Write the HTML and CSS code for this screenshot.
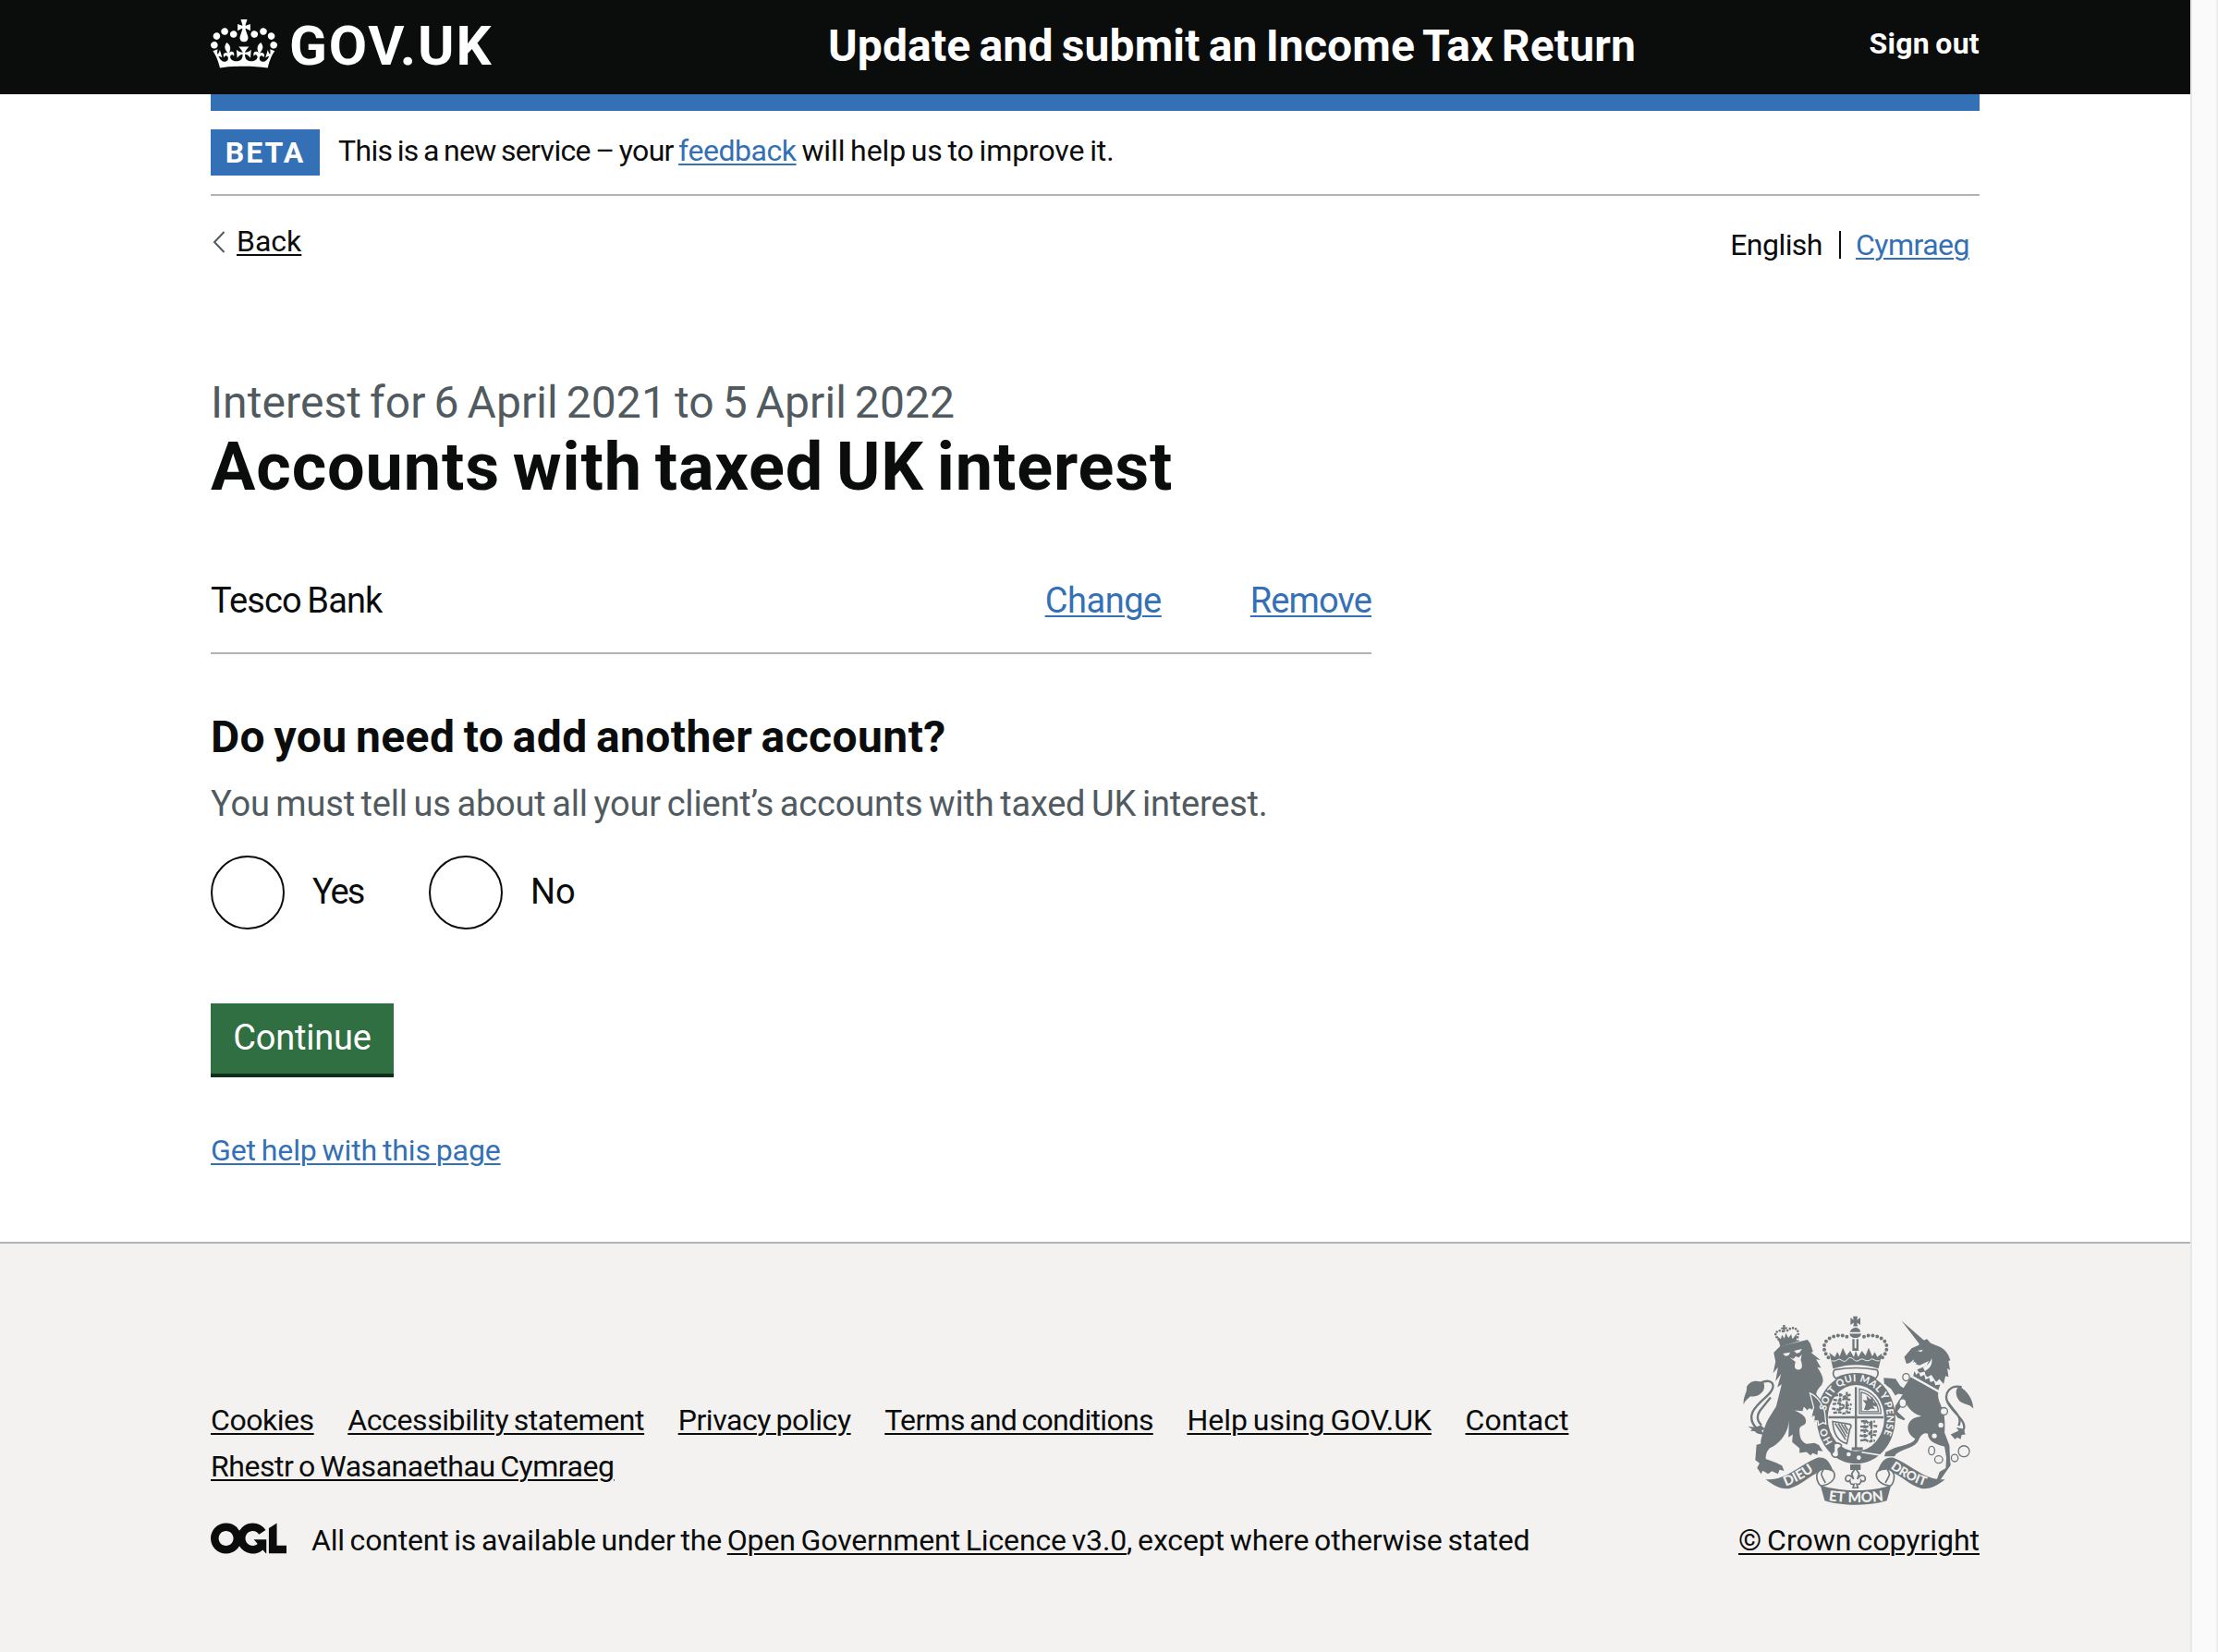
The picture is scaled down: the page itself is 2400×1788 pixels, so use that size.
FILE: index.html
```
<!DOCTYPE html>
<html lang="en">
<head>
<meta charset="utf-8">
<title>Accounts with taxed UK interest</title>
<link rel="stylesheet" href="styles.css">
</head>
<body>
<div class="page">
  <header class="header">
    <div class="container header-row">
      <a class="logo" href="#">
        <svg class="crown" viewBox="0 0 132 97" aria-hidden="true"><path fill="currentColor" fill-rule="evenodd" d="M25 30.2c3.5 1.5 7.7-.2 9.1-3.7 1.5-3.6-.2-7.8-3.9-9.2-3.6-1.4-7.6.3-9.1 3.9-1.4 3.5.3 7.5 3.9 9zM9 39.5c3.6 1.5 7.8-.2 9.2-3.7 1.5-3.6-.2-7.8-3.9-9.1-3.6-1.5-7.6.2-9.1 3.8-1.4 3.5.3 7.5 3.8 9zM4.4 57.2c3.5 1.5 7.7-.2 9.1-3.8 1.5-3.6-.2-7.7-3.9-9.1-3.5-1.5-7.6.3-9.1 3.8-1.4 3.5.3 7.6 3.9 9.1zm38.3-21.4c3.5 1.5 7.7-.2 9.1-3.8 1.5-3.6-.2-7.7-3.9-9.1-3.6-1.5-7.6.3-9.1 3.8-1.3 3.6.4 7.7 3.9 9.1zm64.4-5.6c-3.6 1.5-7.8-.2-9.1-3.7-1.5-3.6.2-7.8 3.8-9.2 3.6-1.4 7.7.3 9.2 3.9 1.3 3.5-.4 7.5-3.9 9zm15.9 9.3c-3.6 1.5-7.7-.2-9.1-3.7-1.5-3.6.2-7.8 3.7-9.1 3.6-1.5 7.7.2 9.2 3.8 1.5 3.5-.3 7.5-3.8 9zm4.7 17.7c-3.6 1.5-7.8-.2-9.2-3.8-1.5-3.6.2-7.7 3.9-9.1 3.6-1.5 7.7.3 9.2 3.8 1.3 3.5-.4 7.6-3.9 9.1zM89.3 35.8c-3.6 1.5-7.8-.2-9.2-3.8-1.4-3.6.2-7.7 3.9-9.1 3.6-1.5 7.7.3 9.2 3.8 1.4 3.6-.3 7.7-3.9 9.1zM69.7 17.7l8.9 4.7V9.3l-8.9 2.8c-.2-.3-.5-.6-.9-.9L72.4 0H59.6l3.5 11.2c-.3.3-.6.5-.9.9l-8.8-2.8v13.1l8.8-4.7c.3.3.6.7.9.9l-5 15.4v.1c-.2.8-.4 1.6-.4 2.4 0 4.1 3.1 7.5 7 8.1h.2c.3 0 .7.1 1 .1.4 0 .7 0 1-.1h.2c4-.6 7.1-4.1 7.1-8.1 0-.8-.1-1.7-.4-2.4V34l-5.1-15.4c.4-.2.7-.6 1-.9zM66 92.8c16.9 0 32.8 1.1 47.1 3.2 4-16.9 8.9-26.7 14-33.5l-9.6-3.4c1 4.9 1.1 7.2 0 10.2-1.5-1.4-3-4.3-4.2-8.7L108.6 76c2.8-2 5-3.2 7.5-3.3-4.4 9.4-10 11.9-13.6 11.2-4.3-.8-6.3-4.6-5.6-7.9 1-4.7 5.7-5.9 8-.5 4.3-8.7-3-11.4-7.6-8.8 7.1-7.2 7.9-13.5 2.1-21.1-8 6.1-8.1 12.3-4.5 20.8-4.7-5.4-12.1-2.5-9.5 6.2 3.4-5.2 7.9-2 7.2 3.1-.6 4.3-6.4 7.8-13.5 7.2-10.3-.9-10.9-8-11.2-13.8 2.5-.5 7.1 1.8 11 7.3L80.2 60c-4.1 4.4-8 5.3-12.3 5.4 1.4-4.4 8-11.6 8-11.6H55.5s6.4 7.2 7.9 11.6c-4.2-.1-8-1-12.3-5.4l1.4 16.4c3.9-5.5 8.5-7.7 10.9-7.3-.3 5.8-.9 12.8-11.1 13.8-7.2.6-12.9-2.9-13.5-7.2-.7-5 3.8-8.3 7.1-3.1 2.7-8.7-4.6-11.6-9.4-6.2 3.7-8.5 3.6-14.7-4.6-20.8-5.8 7.6-5 13.9 2.2 21.1-4.7-2.6-11.9.1-7.7 8.8 2.3-5.5 7.1-4.2 8.1.5.7 3.3-1.3 7.1-5.7 7.9-3.5.7-9-1.8-13.5-11.2 2.5.1 4.7 1.3 7.5 3.3l-4.7-15.4c-1.2 4.4-2.7 7.2-4.3 8.7-1.1-3-.9-5.3 0-10.2l-9.5 3.4c5 6.9 9.9 16.7 14 33.5 14.8-2.1 30.8-3.2 47.7-3.2z"/></svg>
        <span class="logo-text">GOV.UK</span>
      </a>
      <a class="service-name" href="#">Update and submit an Income Tax Return</a>
      <a class="sign-out" href="#">Sign out</a>
    </div>
  </header>

  <div class="container top">
    <div class="bar"></div>
    <div class="phase">
      <strong class="tag">BETA</strong>
      <p class="phase-text"><span class="phase-a">This is a new service – your </span><a class="link phase-b" href="#">feedback</a><span class="phase-c"> will help us to improve it.</span></p>
    </div>
    <div class="nav-row">
      <div class="back">
        <svg class="chevron" viewBox="0 0 14 24" aria-hidden="true"><path d="M12.5 1 2 12l10.500 11" fill="none" stroke="#505a5f" stroke-width="2"/></svg>
        <a class="link dark" href="#">Back</a>
      </div>
      <div class="languages">
        <span class="lang-en">English</span>
        <span class="divider"></span>
        <a class="link lang-cy" href="#">Cymraeg</a>
      </div>
    </div>
  </div>

  <main class="container main">
    <span class="caption">Interest for 6 April 2021 to 5 April 2022</span>
    <h1 class="heading">Accounts with taxed UK interest</h1>
    <div class="account">
      <span class="account-name">Tesco Bank</span>
      <a class="link change" href="#">Change</a>
      <a class="link remove" href="#">Remove</a>
    </div>
    <h2 class="question">Do you need to add another account?</h2>
    <p class="hint">You must tell us about all your client’s accounts with taxed UK interest.</p>
    <div class="radios">
      <label class="radio"><span class="circle"></span><span class="yes">Yes</span></label>
      <label class="radio"><span class="circle"></span><span>No</span></label>
    </div>
    <button class="button" type="button">Continue</button>
    <p class="help"><a class="link" href="#">Get help with this page</a></p>
  </main>

  <footer class="footer">
    <div class="container footer-row">
      <div class="meta">
        <ul class="footer-links">
          <li><a class="link dark cookies" href="#">Cookies</a></li>
          <li><a class="link dark access" href="#">Accessibility statement</a></li>
          <li><a class="link dark privacy" href="#">Privacy policy</a></li>
          <li><a class="link dark terms" href="#">Terms and conditions</a></li>
          <li><a class="link dark using" href="#">Help using GOV.UK</a></li>
          <li><a class="link dark contact" href="#">Contact</a></li>
          <li><a class="link dark rhestr" href="#">Rhestr o Wasanaethau Cymraeg</a></li>
        </ul>
        <div class="licence">
          <svg class="ogl" viewBox="0 0 483.2 195.7" aria-hidden="true"><path fill="currentColor" d="M421.5 142.8V.1l-50.7 32.3v161.1h112.4v-50.7zm-122.3-9.6A47.12 47.12 0 0 1 221 97.8c0-26 21.1-47.1 47.1-47.1 16.7 0 31.4 8.7 39.7 21.8l42.7-27.2A97.63 97.63 0 0 0 268.1 0c-36.5 0-68.3 20.1-85.1 49.7A98 98 0 0 0 97.8 0C43.9 0 0 43.9 0 97.8s43.9 97.8 97.8 97.8c36.5 0 68.3-20.1 85.1-49.7a97.76 97.76 0 0 0 149.6 25.4l19.4 22.2h3v-87.8h-80l24.3 27.5zM97.8 145c-26 0-47.1-21.1-47.1-47.1s21.1-47.1 47.1-47.1 47.1 21.1 47.1 47.1S123.8 145 97.8 145"/></svg>
          <p class="licence-text">All content is available under the <a class="link dark licence-link" href="#">Open Government Licence v3.0</a><span class="licence-tail">, except where otherwise stated</span></p>
        </div>
      </div>
      <div class="copyright">
        <svg class="arms" viewBox="78 70 752 616" aria-hidden="true">
          <defs>
            <path id="garter" d="M370 482A100 120 0 1 1 505 501"/>
            <path id="scroll-left" d="M217 625Q274 604 324 564"/>
            <path id="scroll-right" d="M557 566Q610 606 680 627"/>
            <path id="scroll-mid" d="M356 671Q444 684 540 671"/>
          </defs>
          <g class="ink">
            <!-- lion -->
            <path d="M178 190l20-20 90-22 9 12 9 26-6 4 30 24-14-2 16 28-12-3c16 24 24 42 14 58-10 10-16 18-18 30l29 35 7 50-7 18-10-8-10 5-3-13-14 3 2-15-12 0 10-20c-8-8-16-12-20-2l-12-12-4 14-26-2c16 8 38 17 37 36-1 16-21 11-21 26 0 25 4 40 23 47l26-3 14 7 13 20-16-2-2 14-15-6-7 8-13-12-23 3v-15l-24-20 2-25-14 10 2-55c-3 40-28 70-53 85-15 5-23 20-23 40l33 12 20 10 7 17-15-4-5 14-20-9-12 9-18-11-5 11-13-20 8-15-14-10 4-50 14-4c-3-10 15-66 25-81l25-40 18-72-14 10 12-44-18 24 8-46-16 20 8-38z"/>
            <path d="M80 360c-2-30 12-38 10-58 12-22 34-24 56-12 8 26-18 46-44 42-10 10-18 14-22 28zM94 430c16 4 30 2 42-4l14 12-12 6 10 12c-16 2-26-2-32-10l-14-1 6-5z"/>
            <path class="line" stroke-width="7" d="M124 438c-26-26-22-48-6-68 22-30 56-46 58-70 0-18-18-22-40-12M138 426c-16-16-14-34-4-48l34-42"/>
            <!-- lion's crown -->
            <path d="M197 160l-10-26 14 12 4-14 8 12 4-18 9 16 9-12 4 16 14-18-1 24-53 18z"/>
            <path class="line beads" stroke-width="8" d="M194 148c-16-18-12-26 6-30l12 4M256 140c6-18-2-32-22-30l-14 10"/>
            <path d="M208 100h7v7h7v6h-7v10h-6v-9h-7v-6h6z"/>
            <path class="line" stroke-width="5" d="M200 168l60-18"/>
            <!-- unicorn -->
            <path d="M594 86l82 72-18 12z"/>
            <path d="M677 146l12 13 24 10c22 8 34 24 40 46l-6 2 5 30-9-6 4 28-10-3-6 26-14-16-10 10-16-24-16 10-6-20-18 4-6-11 30-12 8-16-30 14-22-6 4-13-15 12-10 2-7-22 24-28 22-10 14-14 8-4z"/>
            <path d="M624 270l90 48c-4 20 4 32 10 48 12 24 12 60 10 84l16 42 2 50 2 14-32 46-14 4 10-28 20-12 2-34-6-36c-20-6-54-14-54-42-12-6-24 4-30 20-12 28-46 24-74 46l-4 8-34 0 4-14 30-14 36-10c20-6 30-14 30-20-32-18-30-56 0-68 10-4 14-2 20-6-24-6-42-22-50-44l-16 14-12 16 26 24-4 4-20-8-12-16 4-22 24-38-28-4-10-24-22-6-2-20 30 2 16 22 18 10z"/>
            <path d="M828 372c-2-30-20-60-48-72-10 10-12 26 0 44 12 16 34 10 48 28zM754 456l26-12-8-10 24 4 6 18-12 2-4 14-10-6-8 6z"/>
            <path class="line" stroke-width="7" d="M790 302c-36-8-60 18-46 50 14 30 56 54 54 82-2 14-14 20-28 20M744 350l18 24c20 22 26 34 18 54"/>
            <!-- garter -->
            <ellipse cx="446" cy="404" rx="128" ry="148"/>
          </g>
          <g class="paper">
            <ellipse cx="446" cy="403" rx="92" ry="108"/>
            <circle cx="422" cy="521" r="7"/><circle cx="455" cy="532" r="7"/>
            <path d="M208 193l24-4-6 10-10 2zM244 184l26-6-8 12-10 2zM230 206l12 4 8-8 10 4 9-10-3 18c8 22 4 30-8 32-12-2-14-10-9-26z"/>
            <path d="M646 184l18-4-6 8zM614 228l22-8 8 6-22 8zM664 238c14-6 24-16 28-30 4 20-6 34-22 42z"/>
            <path d="M634 244l98 54-14 24-92-52z"/>
            <circle cx="722" cy="426" r="8"/><circle cx="701" cy="461" r="8"/>
            <ellipse cx="589" cy="296" rx="6" ry="9"/>
          </g>
          <!-- chain -->
          <g class="cap chain"><ellipse cx="609" cy="270" rx="11" ry="12"/><ellipse cx="598" cy="354" rx="12" ry="14"/><circle cx="732" cy="381" r="12"/><ellipse cx="692" cy="509" rx="10" ry="14"/><ellipse cx="715" cy="538" rx="13" ry="12"/><ellipse cx="767" cy="533" rx="11" ry="12"/><circle cx="797" cy="511" r="18"/></g>
          <g class="ink">
            <path d="M636 250l6 12 8-8 6 14 12-6 4 16 12-6 4 14 12-4 4 14 16-2-6 18-82-46z"/>
            <!-- shield -->
            <path d="M442 302h7v202h-7zM356 397h180v7H356z"/>
            <g class="line" stroke-width="7">
              <path d="M376 330l20-4 10 8 24-8M372 344l24 2 12-6 22 4M370 358l22-4 16 10 24-6M368 372l24 4 14-8 24 6M372 386l20-2 12 4 26-4M394 322v64M416 318v66" stroke-dasharray="12 3"/>
              <path d="M462 414l16-2 8 8 22-6M460 430l20 2 10-6 26 4M460 444l18-2 12 8 24-4M458 460l20 2 12-8 24 6M460 476l18-2 10 6 20-4M474 410v68M496 412v70" stroke-dasharray="12 3"/>
            </g>
            <path class="line" stroke-width="4" d="M457 308v80h70c0-38-28-74-70-80zM463 318v64h56c-4-32-26-56-56-64"/>
            <path d="M472 376l6-18-10-14 14 2-2-16 12 12 8-8 2 18 14 4-4 10-12-4 8 12-12-2-12 6z"/>
            <path class="line" stroke-width="5" d="M370 414l50 8c12 0 12 12 6 16l-10 48c-30-8-44-32-46-72zM378 420l34 54M388 420l26 44M398 422l20 32M408 424l12 20"/>
            <path d="M432 498h36v10h-36z"/>
            <!-- royal crown -->
            <path d="M371 242l-12-52 18 14 8-16 8 14 10-28 12 26 12-16 12 20 6-20h-12l4-8h16l2 8h-10l8 20 12-20 12 16 10-26 12 28 8-14 8 16 16-12-12 50c-46-16-98-16-138-2z"/>
            <path d="M428 76l10 8-2-12h15l-2 12 11-8v24l-11-8 2 12h-14l2-12-11 8zM444 108c12 2 16 8 16 15h-34c2-8 8-13 18-15zM425 128h38c-2 10-10 14-19 14s-17-4-19-14zM434 146h7v34h-7zM447 146h7v34h-7z"/>
            <path class="line beads-large" stroke-width="12" d="M356 206c-18-22-20-46 2-62 22-12 50-14 68 0M532 206c18-22 20-46-2-62-22-12-50-14-68 0"/>
          </g>
          <path class="cut thin" d="M366 216c16 6 20-8 28-4s14 12 24 0 16-2 26 4 16-10 26-4 18 6 24 0 14 8 28 4"/>
          <path class="cap" d="M376 246c44-8 96-8 138 0 6 8 6 16-4 28-40-20-88-20-130 0-10-10-12-18-4-28z"/>
          <!-- buckle and strap -->
          <path class="cap" d="M374 488c12-8 28 0 24 8l-10 8 2 20c-8 12-22 6-24-4l8-10z"/>
          <path class="cut" d="M464 514l62 10"/>
          <g class="ink">
            <path class="halo" d="M296 322c20 8 42 34 48 62l4 38-10-4-14 8-2-14-14 0 2-14-10 0 8-30z"/>
            <path d="M544 296l-4-16 34-6 16 24 14 10-30 22-14-22z"/>
            <path d="M427 554h34v18h-34z"/>
          </g>
          <path class="cap" d="M444 566l12 18-6 18c6-14 22-18 26-4 2 12-10 14-14 8 0 12-6 14-14 12l4 12h-16l4-12c-8 2-14 0-14-12-4 6-16 4-14-8 4-14 20-10 26 4l-6-18z"/>
          <!-- motto scroll -->
          <g class="ink">
            <path d="M152 602c60 8 112-48 168-70 30-4 40 14 52 44l-42 2c-34 10-62 44-100 54-30 4-54-10-78-30z"/>
            <path d="M736 602c-60 8-112-48-168-70-30-4-40 14-52 44l42 2c34 10 62 44 100 54 30 4 54-10 78-30z"/>
            <path d="M330 622c64 22 166 22 230 0l-14 50c-54 18-148 18-202 0z"/>
          </g>
          <g class="cap"><path d="M372 576c-24-12-50-10-54 14 0 18 6 28 14 34 30-4 54-24 40-48zM516 576c24-12 50-10 54 14 0 18-4 28-12 34-30-4-56-24-42-48zM340 572c-16 16 2 28 6 42M548 572c16 16-2 28-6 42"/></g>
          <g class="motto">
            <text class="motto-garter"><textPath href="#garter">HO<tspan dx="54">SOIT QUI MAL Y PENSE</tspan></textPath></text>
            <text class="motto-left"><textPath href="#scroll-left">DIEU</textPath></text>
            <text class="motto-right"><textPath href="#scroll-right">DROIT</textPath></text>
            <text class="motto-mid"><textPath href="#scroll-mid">ET MON</textPath></text>
          </g>
        </svg>
        <a class="link dark copyright-link" href="#">© Crown copyright</a>
      </div>
    </div>
  </footer>
</div>
<div class="scrollbar"></div>
</body>
</html>
```

FILE: styles.css
```
* { box-sizing: border-box; }

body {
  margin: 0;
  display: flex;
  width: 2400px;
  height: 1788px;
  overflow: hidden;
  background: #fff;
  color: #0b0c0c;
  font-family: Roboto, "Liberation Sans", sans-serif;
  font-size: 32px;
  line-height: 50px;
  word-spacing: -2px;
}

h1, h2, p, ul { margin: 0; padding: 0; }
a { color: inherit; text-decoration: none; }
ul { list-style: none; }

.page {
  display: flex;
  flex-direction: column;
  width: 2370px;
  height: 1788px;
}

.scrollbar {
  width: 30px;
  background: #fafafa;
  border-left: 2px solid #e8e8e8;
  border-right: 2px solid #ededed;
}

.container {
  width: 1914px;
  margin-left: 228px;
}

.link {
  color: #3470b5;
  text-decoration: underline;
  text-decoration-thickness: 2px;
  text-underline-offset: 3px;
}
.link.dark { color: #0b0c0c; }

/* Header */
.header {
  height: 102px;
  background: #0b0c0c;
  color: #fff;
  font-weight: 700;
}
.header-row {
  display: grid;
  grid-template-columns: 668px 1fr auto;
  align-items: start;
}
.logo { display: flex; }
.crown {
  width: 72px;
  height: 53px;
  margin-top: 21px;
}
.logo-text {
  margin-left: 13px;
  font-size: 60px;
  line-height: 99px;
  letter-spacing: 1.8px;
}
.service-name {
  font-size: 48px;
  line-height: 99px;
  letter-spacing: .15px;
  word-spacing: -3px;
}
.sign-out {
  line-height: 94px;
  letter-spacing: .3px;
}

.bar {
  height: 18px;
  background: #3470b5;
}
.phase {
  display: flex;
  gap: 20px;
  padding: 20px 0;
  border-bottom: 2px solid #b1b4b6;
}
.tag {
  width: 118px;
  height: 50px;
  background: #3470b5;
  color: #fff;
  text-align: center;
  letter-spacing: 2px;
}
.phase-text {
  line-height: 46px;
  white-space: pre;
}
.phase-a { letter-spacing: -.66px; }
.phase-b { letter-spacing: -.45px; }
.phase-c { letter-spacing: -.12px; }

.nav-row {
  display: flex;
  justify-content: space-between;
  padding-top: 30px;
  line-height: 38px;
}
.back {
  display: flex;
  gap: 12px;
}
.chevron {
  width: 14px;
  height: 24px;
  margin: 8px 0 0 2px;
}
.languages {
  display: flex;
  padding: 4px 11px 0 0;
}
.lang-en { letter-spacing: -.55px; }
.lang-cy { letter-spacing: -.5px; }
.divider {
  width: 2px;
  height: 30px;
  margin: 4px 16px 0 18px;
  background: #0b0c0c;
}

/* Main content */
.main {
  display: flex;
  flex-direction: column;
  align-items: flex-start;
  height: 1060px;
  padding-top: 122px;
  font-size: 38px;
}
.caption {
  color: #505a5f;
  font-size: 48px;
  line-height: 60px;
  letter-spacing: .07px;
  word-spacing: -3px;
}
.heading {
  font-size: 72px;
  line-height: 80px;
  letter-spacing: .87px;
  word-spacing: -5px;
}
.account {
  display: flex;
  width: 1256px;
  margin-top: 79px;
  padding-bottom: 31px;
  border-bottom: 2px solid #b1b4b6;
}
.account-name {
  flex: 1;
  letter-spacing: -.87px;
}
.change {
  margin-right: 96px;
  letter-spacing: -.45px;
}
.remove { letter-spacing: -.9px; }
.question {
  margin-top: 60px;
  font-size: 48px;
  line-height: 60px;
  letter-spacing: .42px;
  word-spacing: -3px;
}
.hint {
  margin-top: 17px;
  color: #505a5f;
  letter-spacing: -.2px;
  word-spacing: -2.5px;
}
.radios {
  display: flex;
  margin-top: 31px;
}
.radio {
  display: flex;
  width: 236px;
  line-height: 79px;
}
.circle {
  width: 80px;
  height: 80px;
  margin-right: 30px;
  border: 2px solid #0b0c0c;
  border-radius: 50%;
}
.yes { letter-spacing: -2px; }
.button {
  width: 198px;
  height: 76px;
  margin-top: 80px;
  padding: 0 0 1px;
  border: 0;
  background: #2f6f41;
  box-shadow: 0 4px 0 #0e2f1a;
  color: #fff;
  font: 38px/75px Roboto, "Liberation Sans", sans-serif;
  letter-spacing: -.2px;
}
.help {
  margin-top: 58px;
  font-size: 32px;
  letter-spacing: -.1px;
}

/* Footer */
.footer {
  flex: 1;
  border-top: 2px solid #b1b4b6;
  background: #f3f2f1;
}
.footer-row {
  display: flex;
  justify-content: space-between;
}
.meta { padding-top: 166px; }
.footer-links {
  display: flex;
  flex-wrap: wrap;
  column-gap: 36.6px;
  width: 1540px;
}
.cookies { letter-spacing: -.45px; }
.access { letter-spacing: -.4px; }
.privacy { letter-spacing: -.43px; }
.terms { letter-spacing: -.68px; }
.rhestr { letter-spacing: -.45px; }
.licence {
  display: flex;
  margin-top: 30px;
}
.ogl {
  width: 82px;
  height: 34px;
  margin: 6px 27px 0 0;
}
.licence-text { letter-spacing: -.19px; }
.licence-link { letter-spacing: -.14px; }
.licence-tail { letter-spacing: -.13px; }

.copyright {
  display: flex;
  flex-direction: column;
  align-items: flex-end;
  padding-top: 78px;
}
.arms {
  width: 250px;
  height: 205px;
  margin-right: 6px;
}
.copyright-link { margin-top: 13px; }

/* Coat of arms */
.ink { fill: #6f777b; }
.paper { fill: #f3f2f1; }
.line {
  fill: none;
  stroke: #6f777b;
}
.beads {
  stroke-linecap: round;
  stroke-dasharray: 0 10;
}
.beads-large {
  stroke-linecap: round;
  stroke-dasharray: 0 14.5;
}
.cap {
  fill: #f3f2f1;
  stroke: #6f777b;
  stroke-width: 5px;
}
.chain { stroke-width: 4px; }
.cut {
  fill: none;
  stroke: #f3f2f1;
  stroke-width: 5px;
}
.cut.thin { stroke-width: 3px; }
.halo {
  stroke: #f3f2f1;
  stroke-width: 4px;
}
.motto {
  fill: #f3f2f1;
  font-family: Lato, sans-serif;
  font-weight: 900;
  word-spacing: 0;
}
.motto-garter {
  font-size: 32px;
  letter-spacing: 1.4px;
}
.motto-left { font-size: 44px; }
.motto-right { font-size: 41px; }
.motto-mid { font-size: 46px; }
```
